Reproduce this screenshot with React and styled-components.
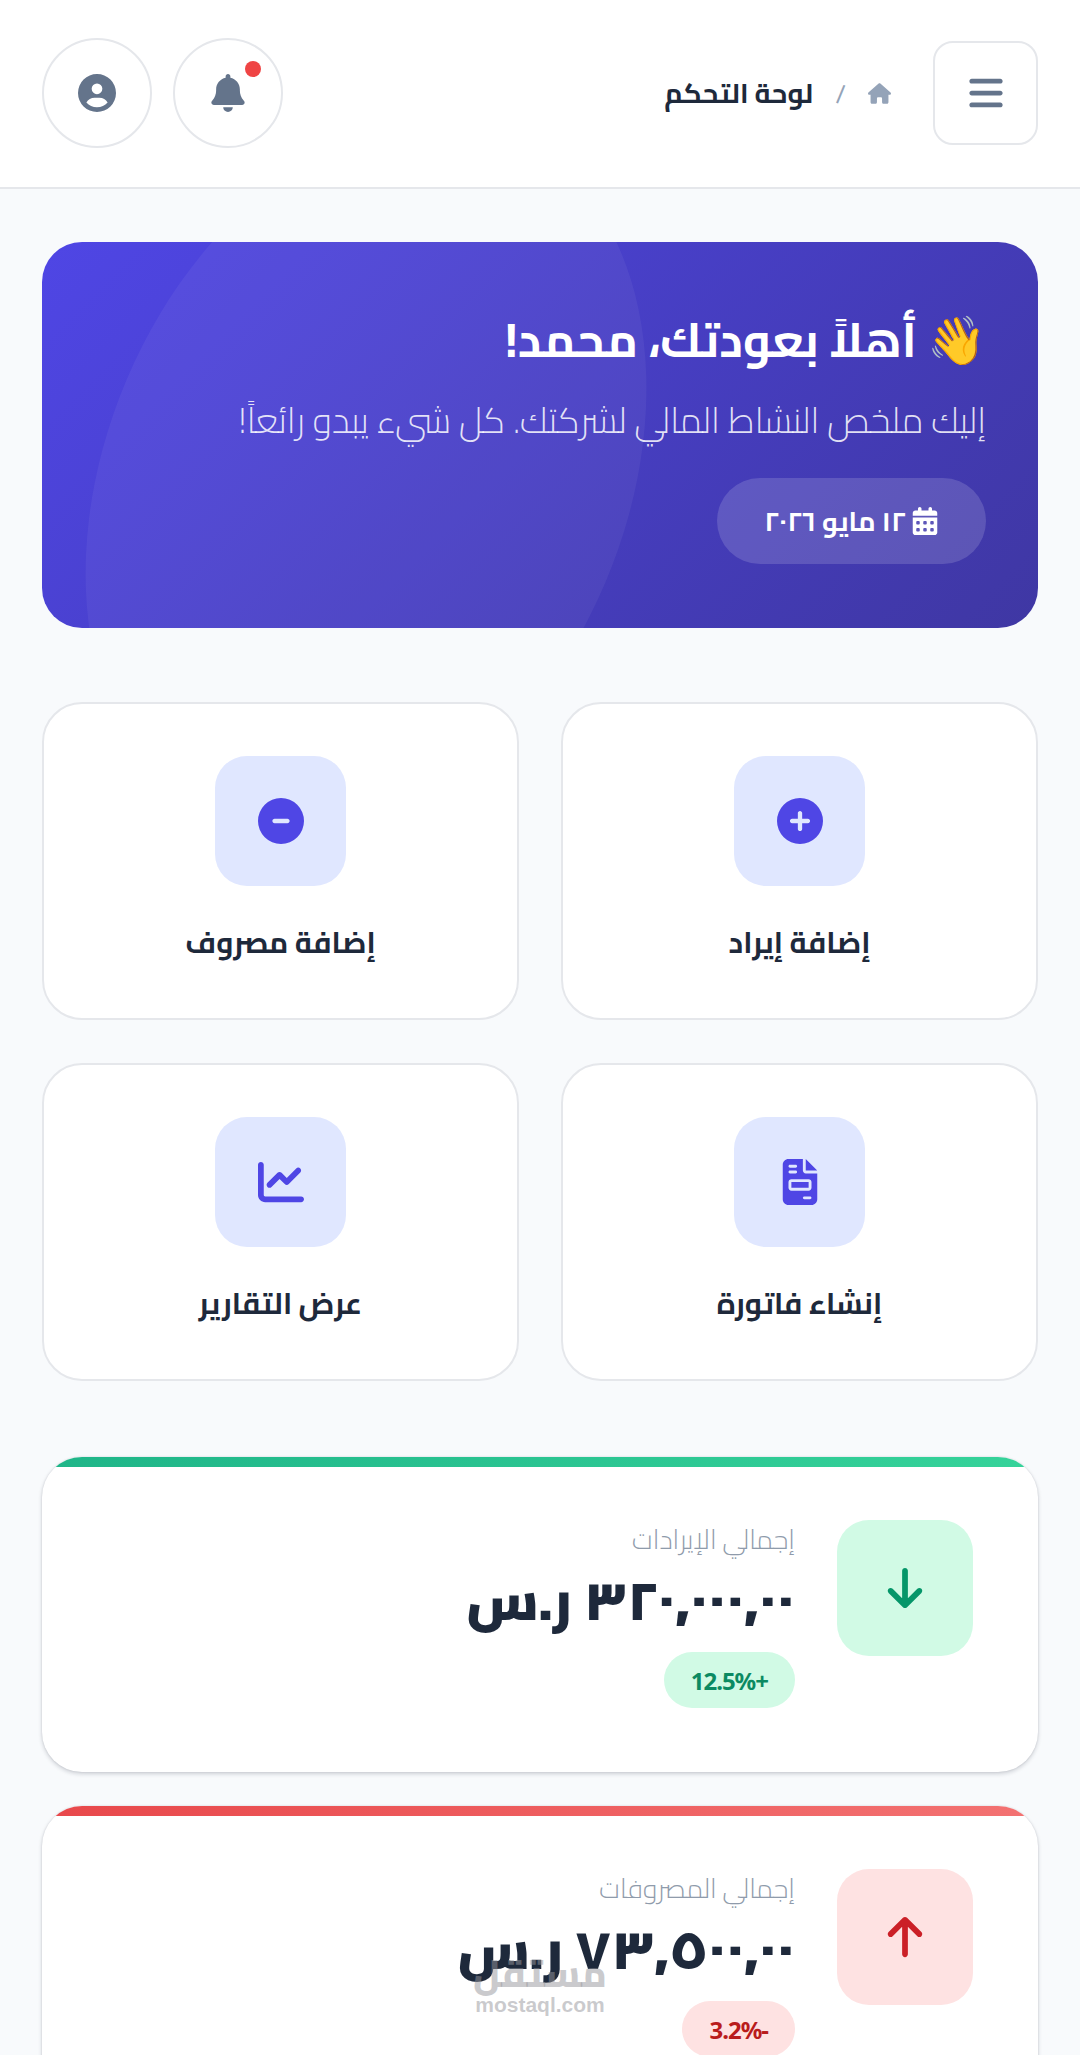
import React from "react";
import styled, { createGlobalStyle } from "styled-components";
import {
  FaBars,
  FaHouse,
  FaBell,
  FaCircleUser,
  FaCalendarDays,
  FaCirclePlus,
  FaCircleMinus,
  FaFileInvoice,
  FaChartLine,
  FaArrowDown,
  FaArrowUp,
} from "react-icons/fa6";

const Global = createGlobalStyle`
  * { box-sizing: border-box; }
  html, body { margin: 0; padding: 0; overflow: hidden; background: #f8fafc; }
  body { font-family: Cairo, "Noto Sans Arabic", "DejaVu Sans", sans-serif; }
`;

const Page = styled.div`
  position: relative;
  width: 1080px;
  height: 2055px;
  overflow: hidden;
  direction: rtl;
`;

const Header = styled.header`
  height: 189px;
  padding: 0 42px 1px;
  display: flex;
  align-items: center;
  justify-content: space-between;
  background: #fff;
  border-bottom: 2px solid #e5e7eb;
`;

const HeaderStart = styled.div`
  display: flex;
  align-items: center;
  gap: 42px;
`;

const MenuButton = styled.button`
  width: 105px;
  height: 104px;
  display: flex;
  align-items: center;
  justify-content: center;
  padding: 0;
  border: 2px solid #e5e7eb;
  border-radius: 20px;
  background: #fff;
  color: #64748b;
`;

const Breadcrumb = styled.nav`
  display: flex;
  align-items: center;
  gap: 22px;
  color: #94a3b8;
`;

const Slash = styled.span`
  font-size: 26px;
`;

const Current = styled.span`
  font-size: 27.5px;
  font-weight: 700;
  color: #1e293b;
`;

const HeaderEnd = styled.div`
  display: flex;
  align-items: center;
  gap: 21px;
`;

const RoundButton = styled.button`
  position: relative;
  width: 110px;
  height: 110px;
  display: flex;
  align-items: center;
  justify-content: center;
  padding: 0;
  border: 2px solid #e5e7eb;
  border-radius: 50%;
  background: #fff;
  color: #64748b;
`;

const Dot = styled.span`
  position: absolute;
  top: 21px;
  right: 20px;
  width: 16px;
  height: 16px;
  border-radius: 50%;
  background: #ef4444;
`;

const Main = styled.main`
  padding: 53px 42px 0;
`;

const Banner = styled.section`
  position: relative;
  height: 386px;
  padding: 56px 52px 0;
  overflow: hidden;
  border-radius: 40px;
  background: linear-gradient(135deg, #4f46e5 0%, #3f37a3 100%);
  color: #fff;

  &::before {
    content: "";
    position: absolute;
    left: 64px;
    top: -135px;
    width: 520px;
    height: 748px;
    border-radius: 50%;
    background: rgba(255, 255, 255, 0.05);
    transform: rotate(23deg);
  }
`;

const BannerTitle = styled.h1`
  position: relative;
  margin: 0;
  font-size: 47.5px;
  line-height: 84px;
  font-weight: 700;
`;

const BannerText = styled.p`
  position: relative;
  margin: 9px 0 0;
  font-size: 36px;
  line-height: 58px;
  font-weight: 300;
  color: rgba(255, 255, 255, 0.85);
`;

const DatePill = styled.div`
  position: relative;
  width: 269px;
  height: 86px;
  margin-top: 29px;
  display: flex;
  align-items: center;
  justify-content: center;
  gap: 5px;
  border-radius: 43px;
  background: rgba(255, 255, 255, 0.15);
  font-size: 27px;
  font-weight: 700;
`;

const ActionGrid = styled.section`
  margin-top: 74px;
  display: grid;
  grid-template-columns: repeat(2, 477px);
  column-gap: 42px;
  row-gap: 43px;
`;

const ActionCard = styled.div`
  height: 318px;
  padding-top: 52px;
  display: flex;
  flex-direction: column;
  align-items: center;
  border: 2px solid #e5e7eb;
  border-radius: 40px;
  background: #fff;
`;

const ActionIcon = styled.div`
  width: 131px;
  height: 130px;
  display: flex;
  align-items: center;
  justify-content: center;
  border-radius: 32px;
  background: #e0e7ff;
  color: #4f46e5;
`;

const ActionLabel = styled.div`
  margin-top: 34px;
  font-size: 29.5px;
  line-height: 46px;
  font-weight: 700;
  color: #1e293b;
`;

const Stats = styled.section`
  margin-top: 76px;
  display: flex;
  flex-direction: column;
  gap: 34px;
`;

const StatCard = styled.article`
  position: relative;
  height: 315px;
  flex-shrink: 0;
  padding: 63px 65px;
  display: flex;
  align-items: flex-start;
  gap: 42px;
  overflow: hidden;
  border-radius: 40px;
  background: #fff;
  box-shadow: 0 2px 4px rgba(15, 23, 42, 0.18), 0 0 2px rgba(15, 23, 42, 0.12);

  &::before {
    content: "";
    position: absolute;
    top: 0;
    left: 0;
    right: 0;
    height: 10px;
    background: ${(p) =>
      p.$tone === "up"
        ? "linear-gradient(90deg, #1fb588, #36d39a)"
        : "linear-gradient(90deg, #e8484b, #f37272)"};
  }
`;

const StatIcon = styled.div`
  width: 136px;
  height: 136px;
  flex-shrink: 0;
  display: flex;
  align-items: center;
  justify-content: center;
  border-radius: 32px;
  background: ${(p) => (p.$tone === "up" ? "#d1fae5" : "#fee2e2")};
  color: ${(p) => (p.$tone === "up" ? "#059669" : "#cb2027")};
`;

const StatBody = styled.div`
  padding-top: 1px;
  display: flex;
  flex-direction: column;
  align-items: flex-start;
`;

const StatLabel = styled.div`
  font-size: 27px;
  line-height: 36px;
  font-weight: 300;
  color: #8f9bab;
`;

const StatValue = styled.div`
  margin-top: 2px;
  font-size: 54px;
  line-height: 84px;
  font-weight: 900;
  color: #1e293b;
`;

const StatBadge = styled.div`
  margin-top: 9px;
  height: 56px;
  padding: 0 27px;
  display: flex;
  align-items: center;
  border-radius: 28px;
  background: ${(p) => (p.$tone === "up" ? "#d1fae5" : "#fee2e2")};
  color: ${(p) => (p.$tone === "up" ? "#0b8a62" : "#b91c1c")};
  font-family: "Noto Sans", sans-serif;
  font-size: 24px;
  font-weight: 700;
  letter-spacing: -1px;
`;

const Watermark = styled.div`
  position: absolute;
  left: 475px;
  top: 1953px;
  width: 130px;
  display: flex;
  flex-direction: column;
  align-items: center;
  color: rgba(150, 150, 155, 0.5);
  pointer-events: none;
`;

const WatermarkArabic = styled.span`
  font-size: 38px;
  line-height: 40px;
  font-weight: 800;
`;

const WatermarkLatin = styled.span`
  font-family: "Liberation Sans", sans-serif;
  font-size: 21px;
  line-height: 24px;
  font-weight: 700;
`;

const actions = [
  { label: "إضافة إيراد", icon: <FaCirclePlus size={46} /> },
  { label: "إضافة مصروف", icon: <FaCircleMinus size={46} /> },
  { label: "إنشاء فاتورة", icon: <FaFileInvoice size={46} /> },
  { label: "عرض التقارير", icon: <FaChartLine size={46} /> },
];

const stats = [
  {
    tone: "up",
    label: "إجمالي الإيرادات",
    value: "٣٢٠,٠٠٠,٠٠ ر.س",
    change: "+12.5%",
    icon: <FaArrowDown size={46} />,
  },
  {
    tone: "down",
    label: "إجمالي المصروفات",
    value: "٧٣,٥٠٠,٠٠ ر.س",
    change: "-3.2%",
    icon: <FaArrowUp size={46} />,
  },
];

export default function App() {
  return (
    <Page>
      <Global />
      <Header>
        <HeaderStart>
          <MenuButton>
            <FaBars size={38} />
          </MenuButton>
          <Breadcrumb>
            <FaHouse size={23} />
            <Slash>/</Slash>
            <Current>لوحة التحكم</Current>
          </Breadcrumb>
        </HeaderStart>
        <HeaderEnd>
          <RoundButton>
            <FaBell size={38} />
            <Dot />
          </RoundButton>
          <RoundButton>
            <FaCircleUser size={38} />
          </RoundButton>
        </HeaderEnd>
      </Header>
      <Main>
        <Banner>
          <BannerTitle>👋 أهلاً بعودتك، محمد!</BannerTitle>
          <BannerText>إليك ملخص النشاط المالي لشركتك. كل شيء يبدو رائعاً!</BannerText>
          <DatePill>
            <FaCalendarDays size={28} />
            <span>١٢ مايو ٢٠٢٦</span>
          </DatePill>
        </Banner>
        <ActionGrid>
          {actions.map((a) => (
            <ActionCard key={a.label}>
              <ActionIcon>{a.icon}</ActionIcon>
              <ActionLabel>{a.label}</ActionLabel>
            </ActionCard>
          ))}
        </ActionGrid>
        <Stats>
          {stats.map((s) => (
            <StatCard key={s.label} $tone={s.tone}>
              <StatIcon $tone={s.tone}>{s.icon}</StatIcon>
              <StatBody>
                <StatLabel>{s.label}</StatLabel>
                <StatValue>{s.value}</StatValue>
                <StatBadge $tone={s.tone}>{s.change}</StatBadge>
              </StatBody>
            </StatCard>
          ))}
        </Stats>
      </Main>
      <Watermark>
        <WatermarkArabic>مستقل</WatermarkArabic>
        <WatermarkLatin>mostaql.com</WatermarkLatin>
      </Watermark>
    </Page>
  );
}
